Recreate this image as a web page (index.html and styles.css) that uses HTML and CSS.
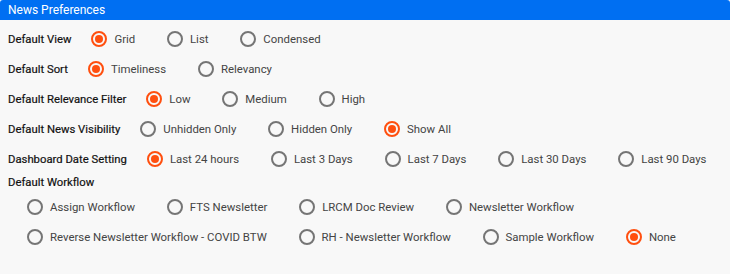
FILE: index.html
```html
<!DOCTYPE html>
<html>
<head>
<meta charset="utf-8"/>
<title>News Preferences</title>
<link rel="stylesheet" href="styles.css">
</head>
<body>
<div class="panel">
  <div class="panel-head">News Preferences</div>
  <div class="panel-body">
    <div class="pref-row">
      <span class="pref-label">Default View</span>
      <label class="opt"><span class="radio on"></span>Grid</label>
      <label class="opt"><span class="radio"></span>List</label>
      <label class="opt"><span class="radio"></span>Condensed</label>
    </div>
    <div class="pref-row">
      <span class="pref-label">Default Sort</span>
      <label class="opt"><span class="radio on"></span>Timeliness</label>
      <label class="opt"><span class="radio"></span>Relevancy</label>
    </div>
    <div class="pref-row">
      <span class="pref-label">Default Relevance Filter</span>
      <label class="opt"><span class="radio on"></span>Low</label>
      <label class="opt"><span class="radio"></span>Medium</label>
      <label class="opt"><span class="radio"></span>High</label>
    </div>
    <div class="pref-row">
      <span class="pref-label">Default News Visibility</span>
      <label class="opt"><span class="radio"></span>Unhidden Only</label>
      <label class="opt"><span class="radio"></span>Hidden Only</label>
      <label class="opt"><span class="radio on"></span>Show All</label>
    </div>
    <div class="pref-row">
      <span class="pref-label">Dashboard Date Setting</span>
      <label class="opt"><span class="radio on"></span>Last 24 hours</label>
      <label class="opt"><span class="radio"></span>Last 3 Days</label>
      <label class="opt"><span class="radio"></span>Last 7 Days</label>
      <label class="opt"><span class="radio"></span>Last 30 Days</label>
      <label class="opt"><span class="radio"></span>Last 90 Days</label>
    </div>
    <div class="pref-title">Default Workflow</div>
    <div class="workflow">
      <div class="pref-row">
        <label class="opt"><span class="radio"></span>Assign Workflow</label>
        <label class="opt"><span class="radio"></span>FTS Newsletter</label>
        <label class="opt"><span class="radio"></span>LRCM Doc Review</label>
        <label class="opt"><span class="radio"></span>Newsletter Workflow</label>
      </div>
      <div class="pref-row">
        <label class="opt"><span class="radio"></span>Reverse Newsletter Workflow - COVID BTW</label>
        <label class="opt"><span class="radio"></span>RH - Newsletter Workflow</label>
        <label class="opt"><span class="radio"></span>Sample Workflow</label>
        <label class="opt"><span class="radio on"></span>None</label>
      </div>
    </div>
  </div>
</div>
</body>
</html>
```
FILE: styles.css
```css
body {
   margin: 0;
   background-color: #f8f8f8;
   font-family: Roboto, "Liberation Sans", sans-serif;
}

.panel {
   width: 730px;
   height: 274px;
}

.panel-head {
   height: 20px;
   line-height: 20px;
   padding-left: 8px;
   background-color: #006ff2;
   color: #fff;
   font-size: 12px;
   border-radius: 3px 3px 0 0;
}

.panel-body {
   padding: 4px 8px;
}

.pref-row {
   display: flex;
   align-items: center;
   height: 30px;
}

.pref-label,
.pref-title {
   flex-shrink: 0;
   white-space: nowrap;
   color: #111;
   font-size: 11.3px;
   font-weight: 400;
   -webkit-text-stroke: 0.2px #111;
   margin-right: 20px;
}

.pref-title {
   height: 18px;
   line-height: 18px;
}

.workflow {
   padding-left: 19px;
}

.opt {
   display: flex;
   align-items: center;
   flex-shrink: 0;
   color: #444;
   font-size: 11.4px;
   margin-right: 31.8px;
   white-space: nowrap;
}

.radio {
   box-sizing: border-box;
   width: 16px;
   height: 16px;
   margin-right: 7px;
   border: 2px solid #757575;
   border-radius: 50%;
   display: flex;
   align-items: center;
   justify-content: center;
}

.radio.on {
   border-color: #ff4f0f;
}

.radio.on::after {
   content: "";
   width: 8px;
   height: 8px;
   border-radius: 50%;
   background-color: #ff4f0f;
}
```
